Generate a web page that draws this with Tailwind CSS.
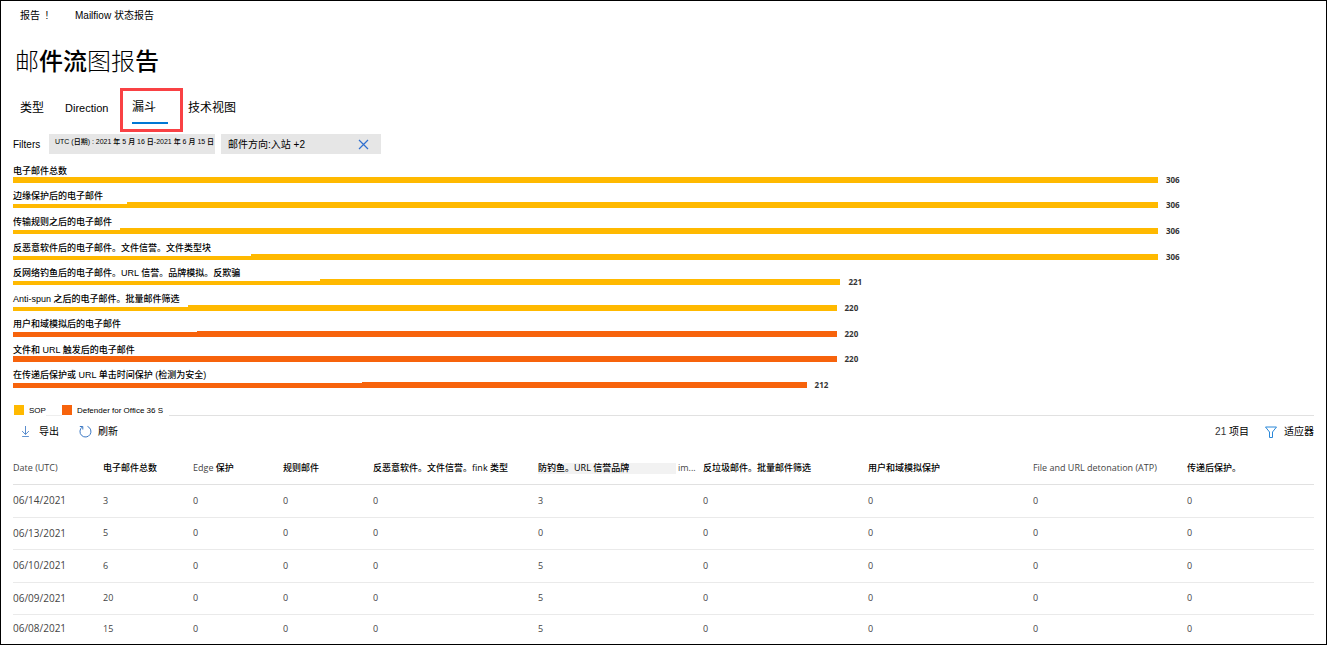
<!DOCTYPE html>
<html lang="zh-CN">
<head>
<meta charset="utf-8">
<meta name="viewport" content="width=device-width, initial-scale=1">
<title>邮件流图报告</title>
<script src="https://cdn.jsdelivr.net/npm/@tailwindcss/browser@4"></script>
</head>
<body class="bg-white text-black font-['Liberation_Sans','Noto_Sans_CJK_SC',sans-serif]">
<div class="flex min-h-screen flex-col border border-black px-3">
  <nav class="flex h-7 items-center gap-6 pl-[7px] text-[10px]" aria-label="导航">
    <a href="#" class="w-[31px] whitespace-pre">报告  !</a>
    <a href="#">Mailfiow 状态报告</a>
  </nav>

  <h1 class="flex h-16 items-center pb-[2px] pl-[2px] font-['Noto_Sans_CJK_SC',sans-serif] text-[24px] font-light">邮<span class="font-medium">件流</span>图报<span class="font-medium">告</span></h1>

  <div class="flex h-[30px] items-center pl-[7px] text-[12px]" role="tablist">
    <button role="tab" class="w-[45px] text-left">类型</button>
    <button role="tab" class="w-[67px] text-left text-[11px]">Direction</button>
    <button role="tab" aria-selected="true" class="relative mr-5 h-[31px] w-9 border-b-2 border-[#0078d4] text-left">漏斗<span class="pointer-events-none absolute -top-[5px] -right-[15px] -bottom-[10px] -left-3 border-3 border-[#f94144]"></span></button>
    <button role="tab" class="text-left">技术视图</button>
  </div>

  <div class="mt-[11px] flex h-5 items-stretch text-[10px]">
    <span class="w-9 self-center">Filters</span>
    <button class="w-[166px] bg-[#e6e6e6] pb-[3px] pl-[6px] text-left text-[7px] font-medium whitespace-nowrap">UTC (日期) : 2021 年 5 月 16 日-2021 年 6 月 15 日</button>
    <div class="ml-[6px] flex w-40 items-center justify-between bg-[#e6e6e6] pr-3 pl-[7px] whitespace-nowrap">
      <span>邮件方向:入站 +2</span>
      <button aria-label="清除"><svg class="block size-[11px]" viewBox="0 0 11 11" fill="none" stroke="#2f6fd0" stroke-width="1.200"><path d="M1 1l9 9M10 1l-9 9"/></svg></button>
    </div>
  </div>

  <div class="mt-[3px] grid h-[231px] grid-rows-9 text-[9px] font-medium">
    <div class="flex flex-col items-start justify-end">
      <span class="relative -mb-[2px] h-[15px] leading-[15px]">电子邮件总数</span>
      <div class="flex h-[6px] w-full items-center gap-2"><i class="h-full bg-[#ffb900]" style="width:88%"></i><b class="font-['Open_Sans'] text-[8px] leading-none text-[#333]">306</b></div>
    </div>
    <div class="flex flex-col items-start justify-end">
      <span class="relative -mb-[2px] h-[15px] bg-white pr-6 leading-[15px]">边缘保护后的电子邮件</span>
      <div class="flex h-[6px] w-full items-center gap-2"><i class="h-full bg-[#ffb900]" style="width:88%"></i><b class="font-['Open_Sans'] text-[8px] leading-none text-[#333]">306</b></div>
    </div>
    <div class="flex flex-col items-start justify-end">
      <span class="relative -mb-[2px] h-[15px] bg-white pr-2 leading-[15px]">传输规则之后的电子邮件</span>
      <div class="flex h-[6px] w-full items-center gap-2"><i class="h-full bg-[#ffb900]" style="width:88%"></i><b class="font-['Open_Sans'] text-[8px] leading-none text-[#333]">306</b></div>
    </div>
    <div class="flex flex-col items-start justify-end">
      <span class="relative -mb-[2px] h-[15px] bg-white pr-10 leading-[15px]">反恶意软件后的电子邮件。文件信誉。文件类型块</span>
      <div class="flex h-[6px] w-full items-center gap-2"><i class="h-full bg-[#ffb900]" style="width:88%"></i><b class="font-['Open_Sans'] text-[8px] leading-none text-[#333]">306</b></div>
    </div>
    <div class="flex flex-col items-start justify-end">
      <span class="relative -mb-[2px] h-[15px] bg-white pr-20 leading-[15px]">反网络钓鱼后的电子邮件。URL 信誉。品牌模拟。反欺骗</span>
      <div class="flex h-[6px] w-full items-center gap-2"><i class="h-full bg-[#ffb900]" style="width:63.6%"></i><b class="font-['Open_Sans'] text-[8px] leading-none text-[#333]">221</b></div>
    </div>
    <div class="flex flex-col items-start justify-end">
      <span class="relative -mb-[2px] h-[15px] bg-white pr-2 leading-[15px]">Anti-spun 之后的电子邮件。批量邮件筛选</span>
      <div class="flex h-[6px] w-full items-center gap-2"><i class="h-full bg-[#ffb900]" style="width:63.3%"></i><b class="font-['Open_Sans'] text-[8px] leading-none text-[#333]">220</b></div>
    </div>
    <div class="flex flex-col items-start justify-end">
      <span class="relative -mb-px h-[15px] bg-white pr-19 leading-[15px]">用户和域模拟后的电子邮件</span>
      <div class="flex h-[6px] w-full items-center gap-2"><i class="h-full bg-[#f7630c]" style="width:63.3%"></i><b class="font-['Open_Sans'] text-[8px] leading-none text-[#333]">220</b></div>
    </div>
    <div class="flex flex-col items-start justify-end">
      <span class="relative -mb-[2px] h-[15px] leading-[15px]">文件和 URL 触发后的电子邮件</span>
      <div class="flex h-[6px] w-full items-center gap-2"><i class="h-full bg-[#f7630c]" style="width:63.3%"></i><b class="font-['Open_Sans'] text-[8px] leading-none text-[#333]">220</b></div>
    </div>
    <div class="flex flex-col items-start justify-end">
      <span class="relative -mb-px h-[15px] bg-white pr-39 leading-[15px]">在传递后保护或 URL 单击时间保护 (检测为安全)</span>
      <div class="flex h-[6px] w-full items-center gap-2"><i class="h-full bg-[#f7630c]" style="width:61%"></i><b class="font-['Open_Sans'] text-[8px] leading-none text-[#333]">212</b></div>
    </div>
  </div>

  <div class="mt-[17px] flex h-[11px] text-[8px] leading-[11px]">
    <i class="mr-[5px] ml-px size-[10px] bg-[#ffb900]"></i><span>SOP</span>
    <i class="w-4 border-b border-[#eee]"></i>
    <i class="mr-[5px] size-[10px] bg-[#f7630c]"></i><span>Defender for Office 36 S</span>
    <i class="ml-[6px] flex-1 border-b border-[#e1e1e1]"></i>
  </div>

  <div class="flex h-[31px] items-center pl-[7px] text-[10px]">
    <button class="flex items-center gap-2">
      <svg class="size-[11px]" viewBox="0 0 11 13" fill="none" stroke="#3b78c4"><path d="M5.500 0v10M1.500 6l4 4 4-4M1.500 12.500h8"/></svg>导出</button>
    <button class="ml-5 flex items-center gap-[6px]">
      <svg class="size-[13px]" viewBox="0 0 13 13" fill="none" stroke="#3b78c4"><path d="M8.500 1.400A5.500 5.500 0 1 1 3.300 2M.8 1.500h3v3"/></svg>刷新</button>
    <span class="ml-auto text-[#333]">21 <span class="text-black">项目</span></span>
    <button class="ml-4 flex items-center gap-[7px]">
      <svg class="size-3" viewBox="0 0 12 12" fill="none" stroke="#2b88d8"><path d="M.5 1h11L7.500 6v5.500h-3V6z"/></svg>适应器</button>
  </div>

  <table class="w-full table-fixed border-collapse text-left font-['Open_Sans','Noto_Sans_CJK_SC',sans-serif] text-[9px] text-[#444]">
    <colgroup><col class="w-[6.92%]"><col class="w-[6.92%]"><col class="w-[6.92%]"><col class="w-[6.92%]"><col class="w-[12.68%]"><col class="w-[12.68%]"><col class="w-[12.68%]"><col class="w-[12.68%]"><col class="w-[11.84%]"><col></colgroup>
    <thead>
      <tr class="h-[37px] border-b border-[#e1e1e1] whitespace-nowrap [&>th]:p-0 [&>th]:pt-1 [&>th]:font-medium">
        <th>Date (UTC)</th><th class="text-black">电子邮件总数</th><th>Edge <span class="text-black">保护</span></th><th class="text-black">规则邮件</th><th class="text-black">反恶意软件。文件信誉。fink 类型</th>
        <th><div class="flex items-center gap-[2px]"><span class="mt-[2px] h-[11px] w-[138px] bg-[#f2f2f2] leading-[9px] text-black">防钓鱼。URL 信誉品牌</span>im...</div></th>
        <th class="text-black">反垃圾邮件。批量邮件筛选</th><th class="text-black">用户和域模拟保护</th><th>File and URL detonation (ATP)</th><th class="text-black">传递后保护。</th>
      </tr>
    </thead>
    <tbody class="[&_td]:p-0 [&_td:first-child]:text-[10px]">
      <tr class="h-[33px] border-b border-[#eaeaea]"><td>06/14/2021</td><td>3</td><td>0</td><td>0</td><td>0</td><td>3</td><td>0</td><td>0</td><td>0</td><td>0</td></tr>
      <tr class="h-8 border-b border-[#eaeaea]"><td>06/13/2021</td><td>5</td><td>0</td><td>0</td><td>0</td><td>0</td><td>0</td><td>0</td><td>0</td><td>0</td></tr>
      <tr class="h-[33px] border-b border-[#eaeaea]"><td>06/10/2021</td><td>6</td><td>0</td><td>0</td><td>0</td><td>5</td><td>0</td><td>0</td><td>0</td><td>0</td></tr>
      <tr class="h-8 border-b border-[#eaeaea]"><td>06/09/2021</td><td>20</td><td>0</td><td>0</td><td>0</td><td>5</td><td>0</td><td>0</td><td>0</td><td>0</td></tr>
      <tr class="h-[29px]"><td>06/08/2021</td><td>15</td><td>0</td><td>0</td><td>0</td><td>5</td><td>0</td><td>0</td><td>0</td><td>0</td></tr>
    </tbody>
  </table>
</div>
</body>
</html>
